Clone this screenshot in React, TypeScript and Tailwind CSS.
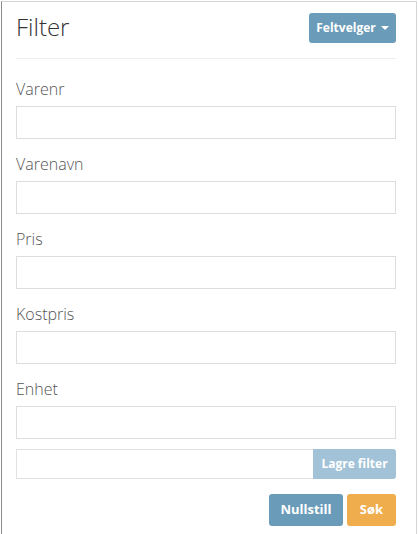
import React from "react";

const fields = ["Varenr", "Varenavn", "Pris", "Kostpris", "Enhet"];

export default function App() {
  return (
    <div className="w-[418px] h-[534px] bg-white pl-[1px] pt-[1px] overflow-hidden" style={{ fontFamily: '"Open Sans", "Liberation Sans", sans-serif' }}>
      <div className="w-[416px] h-[540px] border-t border-l border-r border-t-[#d4d4d4] border-l-[#8c8c8c] border-r-[#d4d4d4] pl-[14px] pr-[20px]">
        <div className="h-[57px] border-b border-[#eeeeee] flex justify-between items-start">
          <h1 className="text-[24px] font-light text-[#333] leading-[24px] mt-[13px]">Filter</h1>
          <button className="mt-[11px] h-[30px] w-[87px] rounded-[3px] bg-[#6a9bb9] text-white text-[12px] font-bold flex items-center justify-center gap-[5px]">
            Feltvelger
            <span className="inline-block w-0 h-0 border-l-[4px] border-r-[4px] border-t-[4px] border-l-transparent border-r-transparent border-t-white" />
          </button>
        </div>
        <div className="pt-[19px]">
          {fields.map((f) => (
            <div key={f} className="mb-[14px]">
              <label className="block text-[16px] font-light text-[#555] leading-[23px] mb-[5px]">{f}</label>
              <input className="block w-full h-[33px] border border-[#dddddd] bg-white" />
            </div>
          ))}
          <div className="flex h-[30px] -mt-[4px]">
            <input className="flex-1 h-[30px] border border-[#e2e2e2] border-r-0 bg-white" />
            <button className="w-[83px] h-[30px] rounded-r-[3px] bg-[#a2c3d7] text-white text-[12px] font-bold">Lagre filter</button>
          </div>
          <div className="flex justify-end gap-[4px] mt-[15px]">
            <button className="w-[74px] h-[32px] rounded-[3px] bg-[#6a9bb9] text-white text-[13px] font-bold">Nullstill</button>
            <button className="w-[49px] h-[32px] rounded-[3px] bg-[#f0ad4e] text-white text-[13px] font-bold">Søk</button>
          </div>
        </div>
      </div>
    </div>
  );
}
